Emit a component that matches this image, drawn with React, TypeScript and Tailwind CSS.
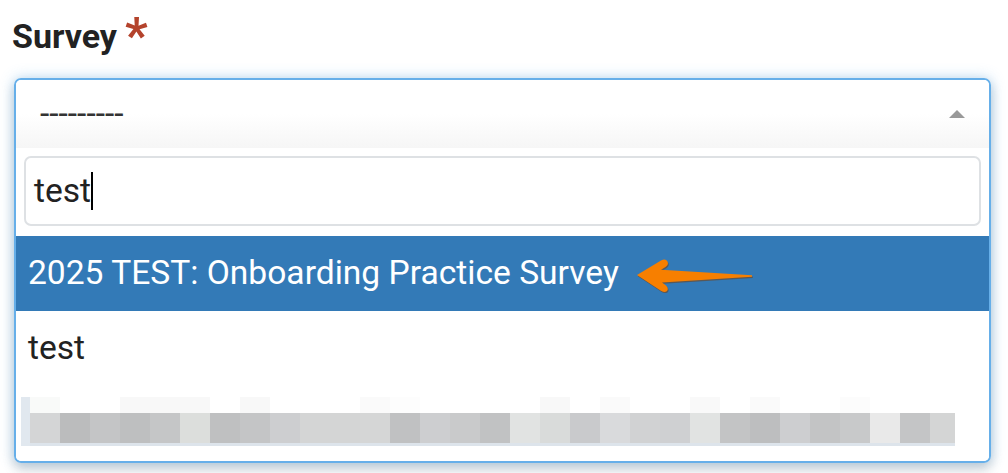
import React from 'react';

const topRow = [
	'bg-[#f9faf9]', 'bg-white', 'bg-white', 'bg-[#f8f8f8]', 'bg-[#f8f8f8]', 'bg-[#f8f8f8]', 'bg-white', 'bg-[#f8f8f8]',
	'bg-white', 'bg-white', 'bg-white', 'bg-[#fafafa]', 'bg-[#fdfdfd]', 'bg-white', 'bg-white', 'bg-white',
	'bg-white', 'bg-[#f8f8f8]', 'bg-white', 'bg-[#fafafa]', 'bg-white', 'bg-white', 'bg-[#f9f9f9]', 'bg-white',
	'bg-[#fafafa]', 'bg-white', 'bg-white', 'bg-[#fcfcfc]', 'bg-white', 'bg-white', 'bg-white',
];

const mainRow = [
	'bg-[#d4d5d6]', 'bg-[#bbbcbd]', 'bg-[#c4c5c6]', 'bg-[#bebfc0]', 'bg-[#c5c6c7]', 'bg-[#dcdedc]', 'bg-[#bfc0c1]', 'bg-[#c4c5c6]',
	'bg-[#cdced0]', 'bg-[#d4d5d5]', 'bg-[#d4d5d5]', 'bg-[#d5d6d6]', 'bg-[#c0c1c2]', 'bg-[#cdced0]', 'bg-[#c9cacb]', 'bg-[#c1c2c3]',
	'bg-[#e1e3e2]', 'bg-[#d9dbda]', 'bg-[#c9cacc]', 'bg-[#d9dadc]', 'bg-[#d1d2d3]', 'bg-[#cfd0d2]', 'bg-[#e1e3e2]', 'bg-[#c3c4c5]',
	'bg-[#bdbebf]', 'bg-[#cdced0]', 'bg-[#c3c4c5]', 'bg-[#c8c9ca]', 'bg-[#e9e9e9]', 'bg-[#c4c5c6]', 'bg-[#d4d5d5]',
];

function Arrow() {
	const d =
		'M637,274 L661,259.5 Q665.5,257 667.5,260.5 Q669,263.5 665.5,266 L661,268.8 L752,274.2 L752,275.8 L662,281.5 L666,284.5 Q669,287.5 667,290 Q664,292 660.5,289.5 Z';
	return (
		<svg width="130" height="45" viewBox="630 250 130 45" className="ml-[11px] shrink-0">
			<path d={d} fill="#7a3d0a" opacity="0.55" transform="translate(0.8,1.2)" />
			<path d={d} fill="#f77f00" />
		</svg>
	);
}

export default function App() {
	return (
		<div className="bg-white w-full h-[473px] overflow-hidden font-['Roboto',sans-serif] text-[#333]">
			<div className="pl-[12px] pt-[16px] h-[56px] flex items-start">
				<span className="text-[34px] leading-[40px] font-bold text-[#222]">Survey</span>
				<span className="ml-[8px] text-[50px] leading-none font-bold text-[#b4432c] -mt-[5px]">*</span>
			</div>

			<div className="mt-[22px] ml-[14px] w-[977px] border-2 border-[#66afe9] rounded-[7px] overflow-hidden shadow-[0_0_14px_rgba(102,175,233,0.45),0_6px_12px_rgba(0,0,0,0.175)]">
				<div className="h-[68px] flex items-center justify-between pl-[24px] pr-[24px] bg-gradient-to-b from-white from-50% to-[#f6f6f6]">
					<span className="text-[33.6px]">---------</span>
					<span className="w-0 h-0 border-l-[8px] border-r-[8px] border-b-[8px] border-l-transparent border-r-transparent border-b-[#999]" />
				</div>

				<div className="bg-white">
					<div className="px-[8px] pt-[8px] pb-[10px]">
						<div className="h-[70px] border-2 border-[#dee1e4] rounded-[7px] flex items-center pl-[8px]">
							<span className="text-[33.6px] text-[#222]">test</span>
							<span className="w-[2px] h-[38px] bg-black" />
						</div>
					</div>

					<div className="h-[75px] bg-[#337ab7] text-white flex items-center pl-[12px]">
						<span className="text-[33.6px]">2025 TEST: Onboarding Practice Survey</span>
						<Arrow />
					</div>
					<div className="h-[75px] flex items-center pl-[12px]">
						<span className="text-[33.6px] text-[#222]">test</span>
					</div>

					<div className="mt-[11px] ml-[5px] flex h-[49px]">
						<div className="w-[9px] bg-[#e1e8ef]" />
						<div className="flex flex-col w-[925px]">
							<div className="flex h-[16px]">
								{topRow.map((c, i) => (
									<div key={i} className={`${c} ${i === 30 ? 'w-[25px]' : 'w-[30px]'}`} />
								))}
							</div>
							<div className="flex h-[30px]">
								{mainRow.map((c, i) => (
									<div key={i} className={`${c} ${i === 30 ? 'w-[25px]' : 'w-[30px]'}`} />
								))}
							</div>
							<div className="h-[3px] bg-[#dde4eb]" />
						</div>
					</div>
					<div className="h-[15px]" />
				</div>
			</div>
		</div>
	);
}
